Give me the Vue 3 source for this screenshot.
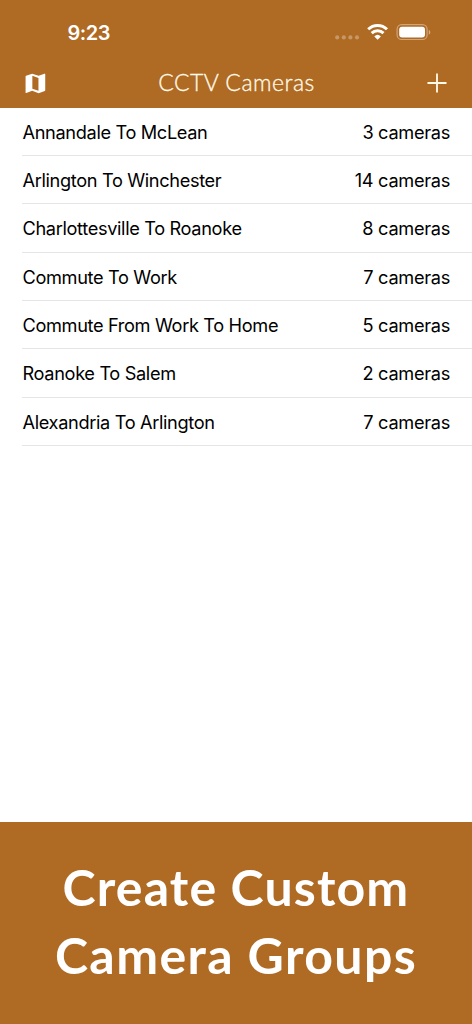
<script setup>
const groups = [
  { name: 'Annandale To McLean', count: 3 },
  { name: 'Arlington To Winchester', count: 14 },
  { name: 'Charlottesville To Roanoke', count: 8 },
  { name: 'Commute To Work', count: 7 },
  { name: 'Commute From Work To Home', count: 5 },
  { name: 'Roanoke To Salem', count: 2 },
  { name: 'Alexandria To Arlington', count: 7 },
]
</script>

<template>
  <div class="screen">
    <header class="top">
      <div class="status">
        <span class="time">9:23</span>
        <svg class="indicators" width="98" height="20" viewBox="0 0 98 20">
          <g fill="#fff" fill-opacity=".3">
            <circle cx="3.2" cy="14.4" r="2.1" /><circle cx="9.8" cy="14.4" r="2.1" />
            <circle cx="16.4" cy="14.4" r="2.1" /><circle cx="23" cy="14.4" r="2.1" />
          </g>
          <g fill="none" stroke="#fff" stroke-width="2.9">
            <path d="M34.2 6.3a13.4 13.4 0 0 1 18.8 0" />
            <path d="M37.7 10.1a8.4 8.4 0 0 1 11.8 0" />
          </g>
          <path d="M40.3 13.4a4.8 4.8 0 0 1 6.6 0l-3.3 3.3z" fill="#fff" />
          <rect x="63.1" y="1.7" width="30" height="14.8" rx="4.6" fill="none" stroke="#fff" stroke-opacity=".4" stroke-width="1.2" />
          <rect x="65.2" y="3.8" width="25.8" height="10.7" rx="2.9" fill="#fff" />
          <path d="M94.8 6.9c2 .7 2 4 0 4.7z" fill="#fff" fill-opacity=".45" />
        </svg>
      </div>
      <nav class="bar">
        <svg class="map" width="21" height="21" viewBox="0 0 22 22">
          <path fill="#fff" fill-rule="evenodd" d="M20.4.7 14.3 3 7.5.7 1.1 2.8q-.5.2-.5.7v17q0 .8.8.5l6.1-2.3 6.8 2.4 6.4-2.2q.5-.2.5-.7V1.1q0-.6-.8-.4zM7.7 2.9l6.4 2.3v13.5l-6.4-2.3z" />
        </svg>
        <h1>CCTV Cameras</h1>
        <svg class="plus" width="20" height="20" viewBox="0 0 20 20">
          <path d="M10 .5v19M.5 10h19" stroke="#fffbe8" stroke-width="1.8" />
        </svg>
      </nav>
    </header>
    <ul class="list">
      <li v-for="g in groups" :key="g.name">
        <span class="name">{{ g.name }}</span><span class="count">{{ g.count }} cameras</span>
      </li>
    </ul>
    <footer class="promo">
      <div class="line-one">Create Custom</div>
      <div class="line-two">Camera Groups</div>
    </footer>
  </div>
</template>

<style>
body { margin: 0; background: #fff; }
</style>

<style scoped>
.screen { width: 472px; height: 1024px; display: flex; flex-direction: column; overflow: hidden; background: #fff; }
.top { height: 107.5px; flex: none; background: #af6a24; color: #fff; }
.status { height: 60px; display: flex; justify-content: space-between; align-items: flex-start; padding: 0 40px 0 67.5px; }
.time { font: 600 20px/24px Inter, sans-serif; letter-spacing: -.5px; margin-top: 21px; }
.indicators { margin-top: 23px; }
.bar { height: 46px; display: grid; grid-template-columns: 21px 1fr 20px; align-items: center; padding: 0 25px 0 25px; }
.bar h1 { margin: 0 0 2px; text-align: center; font: 300 23px/30px Lato, sans-serif; letter-spacing: .5px; color: #fffbe8; -webkit-text-stroke: .3px #fffbe8; }
.list { flex: 1; margin: 0; padding: 0; list-style: none; font: 400 18.2px/24px Inter, sans-serif; color: #000; }
.list li { box-sizing: border-box; height: 48.36px; margin-left: 22px; padding: 1px 22px 0 .5px; display: flex; align-items: center; justify-content: space-between; border-bottom: 1px solid #e5e5e5; }
.name { letter-spacing: -.35px; }
.count { letter-spacing: -.3px; }
.promo { box-sizing: border-box; height: 202px; padding-top: 31px; background: #af6a24; color: #fff; text-align: center; font: 700 50px/68px Lato, sans-serif; }
.line-one { letter-spacing: 1.15px; }
.line-two { letter-spacing: 1.4px; }
</style>
